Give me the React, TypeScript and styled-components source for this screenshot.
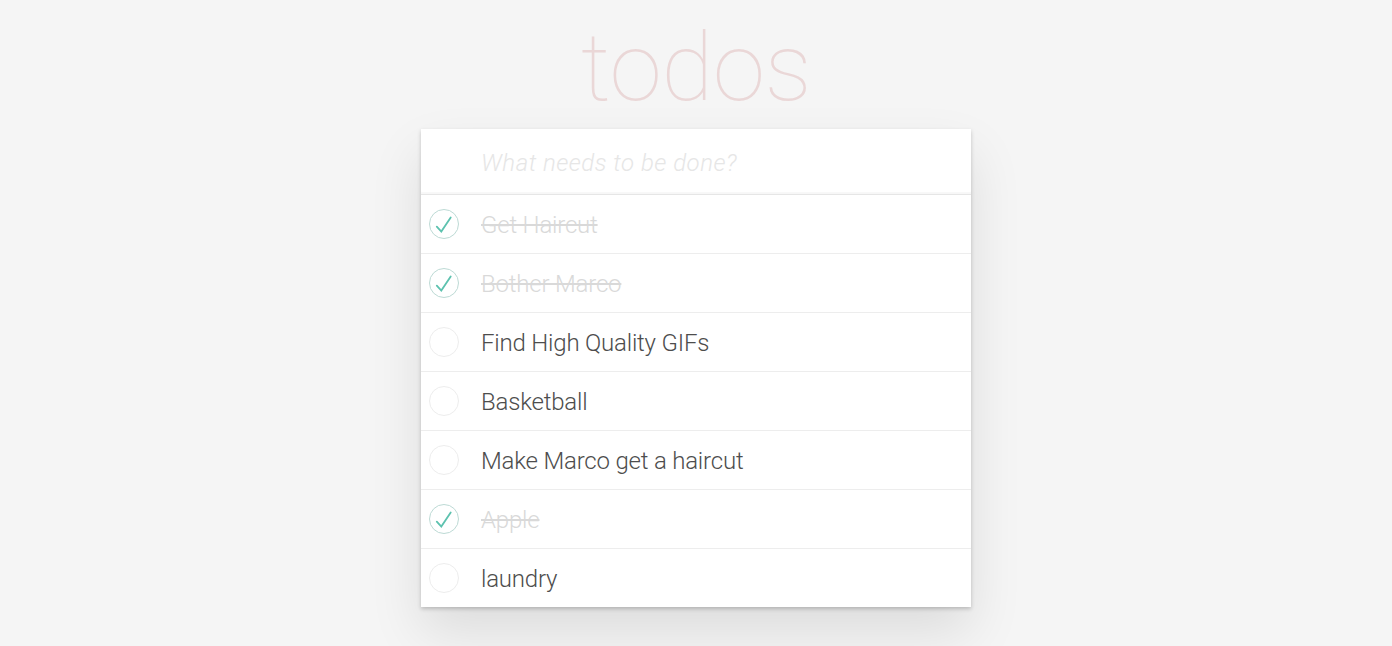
import React from "react";
import styled, { createGlobalStyle } from "styled-components";

const Global = createGlobalStyle`
  html, body { margin: 0; padding: 0; }
  body {
    background: #f5f5f5;
    font-family: Roboto, "Helvetica Neue", Helvetica, Arial, sans-serif;
    font-weight: 300;
    color: #4d4d4d;
    -webkit-font-smoothing: antialiased;
  }
`;

const Page = styled.main`
  display: flex;
  flex-direction: column;
  align-items: center;
  min-height: 646px;
`;

const Title = styled.h1`
  margin: 0;
  height: 129px;
  box-sizing: border-box;
  padding-top: 13px;
  font-size: 95px;
  line-height: 110px;
  font-weight: 100;
  letter-spacing: -0.5px;
  color: rgba(175, 47, 47, 0.15);
  text-align: center;
  font-family: Roboto, "Helvetica Neue", sans-serif;
`;

const Card = styled.section`
  width: 550px;
  background: #fff;
  box-shadow: 0 2px 4px 0 rgba(0, 0, 0, 0.2), 0 25px 50px 0 rgba(0, 0, 0, 0.1);
`;

const NewTodo = styled.input`
  display: block;
  width: 100%;
  box-sizing: border-box;
  height: 65px;
  margin: 0;
  padding: 17px 16px 15px 60px;
  border: none;
  outline: none;
  font-family: inherit;
  font-size: 24px;
  font-weight: 300;
  letter-spacing: 0.5px;
  color: #4d4d4d;
  background: transparent;
  box-shadow: inset 0 -2px 1px rgba(0, 0, 0, 0.03);
  &::placeholder {
    font-style: italic;
    font-weight: 300;
    color: #e6e6e6;
  }
`;

const List = styled.ul`
  list-style: none;
  margin: 0;
  padding: 0;
  border-top: 1px solid #e6e6e6;
`;

const Item = styled.li<{ $last?: boolean }>`
  display: flex;
  align-items: center;
  height: 58px;
  border-bottom: ${(p) => (p.$last ? "none" : "1px solid #ededed")};
`;

const Toggle = styled.span`
  width: 60px;
  display: flex;
  align-items: center;
  padding-left: 7px;
  box-sizing: border-box;
`;

const Label = styled.label<{ $done: boolean }>`
  font-size: 24px;
  line-height: 29px;
  font-weight: 300;
  letter-spacing: -0.2px;
  color: ${(p) => (p.$done ? "#d9d9d9" : "#4d4d4d")};
  text-decoration: ${(p) => (p.$done ? "line-through" : "none")};
  padding-top: 3px;
`;

function Check({ done }: { done: boolean }) {
  return (
    <svg width="32" height="32" viewBox="0 0 32 32">
      <circle cx="16" cy="16" r="14.5" fill="none" stroke={done ? "#bddad5" : "#ededed"} strokeWidth="1" />
      {done && (
        <path d="M8.8 18.6 L13.3 23.6 L22.7 9.4" fill="none" stroke="#5dc2af" strokeWidth="1.8" strokeLinecap="round" strokeLinejoin="miter" />
      )}
    </svg>
  );
}

const todos = [
  { text: "Get Haircut", done: true },
  { text: "Bother Marco", done: true },
  { text: "Find High Quality GIFs", done: false },
  { text: "Basketball", done: false },
  { text: "Make Marco get a haircut", done: false },
  { text: "Apple", done: true },
  { text: "laundry", done: false },
];

export default function App() {
  return (
    <Page>
      <Global />
      <Title>todos</Title>
      <Card>
        <NewTodo placeholder="What needs to be done?" />
        <List>
          {todos.map((t, i) => (
            <Item key={i} $last={i === todos.length - 1}>
              <Toggle>
                <Check done={t.done} />
              </Toggle>
              <Label $done={t.done}>{t.text}</Label>
            </Item>
          ))}
        </List>
      </Card>
    </Page>
  );
}
